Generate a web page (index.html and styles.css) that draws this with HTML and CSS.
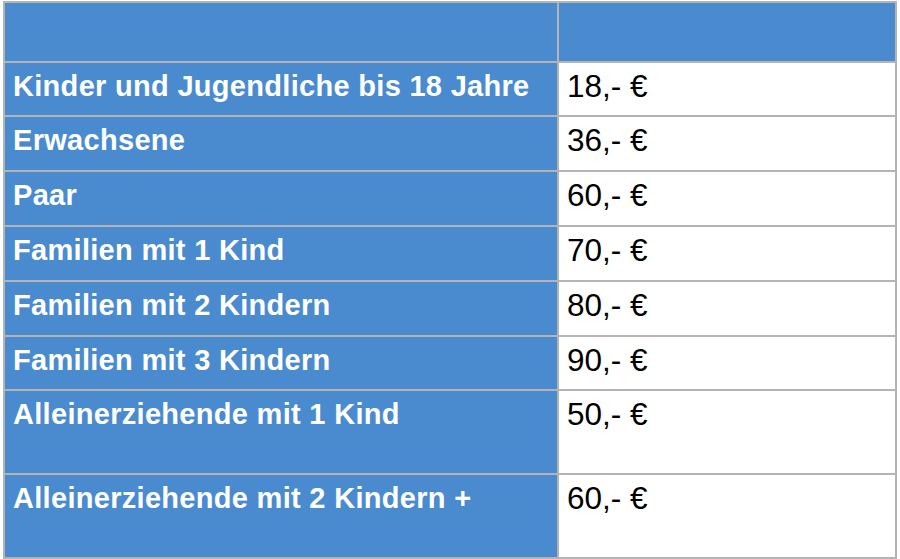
FILE: index.html
```html
<!DOCTYPE html>
<html lang="de">
<head>
<meta charset="utf-8">
<link rel="stylesheet" href="styles.css">
</head>
<body>
<table class="prices">
  <tr class="head"><th></th><th></th></tr>
  <tr class="r54"><td class="label">Kinder und Jugendliche bis 18 Jahre</td><td class="value">18,- €</td></tr>
  <tr class="r55"><td class="label">Erwachsene</td><td class="value">36,- €</td></tr>
  <tr class="r55"><td class="label">Paar</td><td class="value">60,- €</td></tr>
  <tr class="r55"><td class="label">Familien mit 1 Kind</td><td class="value">70,- €</td></tr>
  <tr class="r55"><td class="label">Familien mit 2 Kindern</td><td class="value">80,- €</td></tr>
  <tr class="r54"><td class="label">Familien mit 3 Kindern</td><td class="value">90,- €</td></tr>
  <tr class="tall"><td class="label">Alleinerziehende mit 1 Kind</td><td class="value">50,- €</td></tr>
  <tr class="tall"><td class="label">Alleinerziehende mit 2 Kindern +</td><td class="value">60,- €</td></tr>
</table>
</body>
</html>
```
FILE: styles.css
```css
html, body {
  margin: 0;
  padding: 0;
  background: #ffffff;
}
body {
  padding: 1px 0 0 3px;
  font-family: "Liberation Sans", Arial, sans-serif;
}
.prices {
  border-collapse: collapse;
  width: 894px;
  table-layout: fixed;
  border: 2px solid #b4b4b4;
}
.prices th, .prices td {
  border: 2px solid #b4b4b4;
  padding: 7px 8px 0 8px;
  vertical-align: top;
  line-height: 32px;
  text-align: left;
  white-space: nowrap;
}
.prices th:first-child, .prices td.label {
  width: 536px;
}
.head th {
  background: #4a8bd0;
  height: 51px;
}
.label {
  background: #4a8bd0;
  color: #ffffff;
  font-weight: bold;
  font-size: 29px;
  letter-spacing: 0.3px;
}
.value {
  background: #ffffff;
  color: #000000;
  font-size: 31.5px;
  padding-left: 7px;
}
.r54 td { height: 45px; }
.r55 td { height: 46px; }
.tall td { height: 75px; }
```
